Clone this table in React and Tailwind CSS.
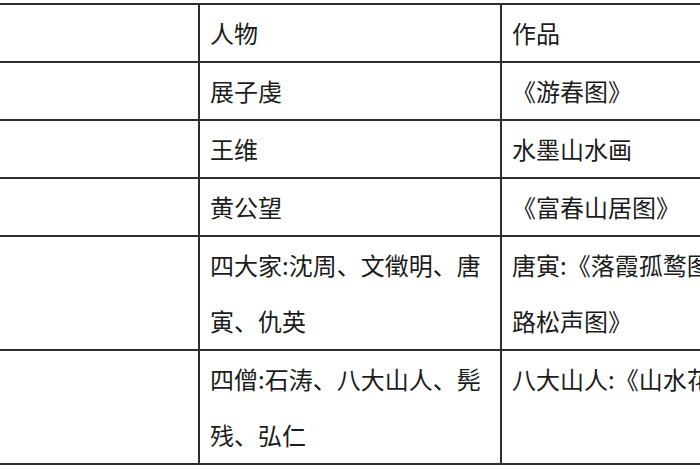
import React from "react";

const rows = [
  { a: ["人物"], b: ["作品"], h: "h-[58px]" },
  { a: ["展子虔"], b: ["《游春图》"], h: "h-[58px]" },
  { a: ["王维"], b: ["水墨山水画"], h: "h-[58px]" },
  { a: ["黄公望"], b: ["《富春山居图》"], h: "h-[58px]" },
  { a: ["四大家:沈周、文徵明、唐", "寅、仇英"], b: ["唐寅:《落霞孤鹜图》、《山", "路松声图》"], h: "h-[114px]" },
  { a: ["四僧:石涛、八大山人、髡", "残、弘仁"], b: ["八大山人:《山水花鸟册》"], h: "h-[114px]" },
];

function Cell({ lines, className }) {
  return (
    <div className={"border-r-2 border-[#2e2e2e] pl-[10px] overflow-hidden " + className}>
      {lines.map((l, i) => (
        <div key={i} className="h-[56px] leading-[56px] whitespace-nowrap">
          {l}
        </div>
      ))}
    </div>
  );
}

export default function App() {
  return (
    <div
      className="w-[700px] h-[470px] overflow-hidden bg-white pt-[3px] text-[24px] text-[#1c1c1c]"
      style={{ fontFamily: '"Noto Sans CJK SC", "Noto Sans", sans-serif' }}
    >
      <div className="w-[900px] border-t-2 border-[#2e2e2e]">
        {rows.map((r, i) => (
          <div key={i} className={"flex border-b-2 border-[#2e2e2e] " + r.h}>
            <div className="w-[200px] shrink-0 border-r-2 border-[#2e2e2e]" />
            <Cell lines={r.a} className="w-[302px] shrink-0" />
            <Cell lines={r.b} className="w-[302px] shrink-0" />
          </div>
        ))}
      </div>
    </div>
  );
}
